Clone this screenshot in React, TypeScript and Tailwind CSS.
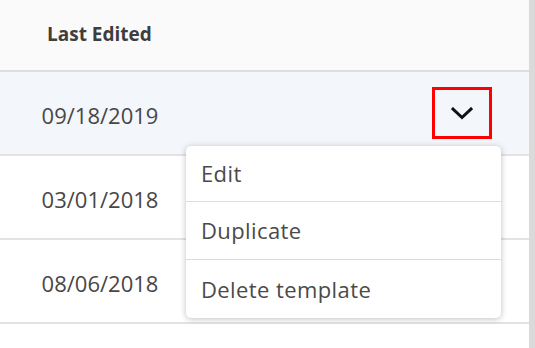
import { useState } from 'react'

const rows = [
    { date: '09/18/2019', active: true },
    { date: '03/01/2018', active: false },
    { date: '08/06/2018', active: false },
]

const menuItems = [
    { label: 'Edit', cls: 'h-[56px] border-b border-[#dcdcdc]' },
    { label: 'Duplicate', cls: 'h-[58px] border-b border-[#dcdcdc]' },
    { label: 'Delete template', cls: 'h-[58px]' },
]

function ChevronDown() {
    return (
        <svg width="22" height="13" viewBox="0 0 22 13" fill="none">
            <path d="M2 2 L11 10.5 L20 2" stroke="#111" strokeWidth="3" strokeLinecap="square" />
        </svg>
    )
}

export default function App() {
    const [open] = useState(true)

    return (
        <div className="flex w-[535px] h-[348px] bg-white overflow-hidden font-['Open_Sans',sans-serif] text-[#474747]">
            <div className="flex-1 flex flex-col">
                <div className="h-[72px] bg-[#fafafa] border-b-2 border-[#dedede] flex items-center pl-[47px] pb-[2px]">
                    <span className="text-[19px] font-bold text-[#3e3e3e]">Last Edited</span>
                </div>
                {rows.map((row, i) => (
                    <div
                        key={i}
                        className={`relative h-[84px] border-b-2 border-[#e3e3e3] flex items-center justify-between pr-[37px] ${row.active ? 'bg-[#f3f6fa]' : 'bg-white'}`}>
                        <span className="w-[200px] text-center text-[22px] pt-[5px]">{row.date}</span>
                        {row.active && (
                            <button className="w-[60px] h-[52px] border-[3px] border-[#ff0000] flex items-center justify-center">
                                <ChevronDown />
                            </button>
                        )}
                        {row.active && open && (
                            <div className="absolute z-10 left-[186px] top-[74px] w-[315px] bg-white rounded-[5px] shadow-[0_1px_6px_rgba(0,0,0,0.25)] flex flex-col">
                                {menuItems.map((item) => (
                                    <div
                                        key={item.label}
                                        className={`${item.cls} flex items-center pl-[15px] text-[22px] tracking-[0.4px] text-[#4a4a4a]`}>
                                        {item.label}
                                    </div>
                                ))}
                            </div>
                        )}
                    </div>
                ))}
            </div>
            <div className="w-[6px] bg-[#dadada]"></div>
        </div>
    )
}
